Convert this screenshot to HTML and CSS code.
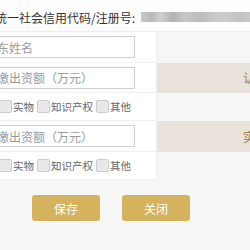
FILE: index.html
```html
<!DOCTYPE html>
<html lang="zh-CN">
<head>
    <meta charset="UTF-8">
    <title>股东信息</title>
    <link rel="stylesheet" href="styles.css">
</head>
<body>
    <div class="page">
        <div class="head-row">
            <span class="head-label">统一社会信用代码/注册号:</span>
            <span class="masked"></span>
        </div>
        <div class="form-table">
            <div class="cell left">
                <input class="text-input" type="text" placeholder="股东姓名">
            </div>
            <div class="cell right plain"></div>

            <div class="cell left">
                <input class="text-input" type="text" placeholder="实缴出资额（万元）">
            </div>
            <div class="cell right tinted">认缴出资额</div>

            <div class="cell left checks">
                <label class="check"><span class="box"></span>实物</label>
                <label class="check"><span class="box"></span>知识产权</label>
                <label class="check"><span class="box"></span>其他</label>
            </div>
            <div class="cell right plain"></div>

            <div class="cell left">
                <input class="text-input" type="text" placeholder="实缴出资额（万元）">
            </div>
            <div class="cell right tinted">实缴出资额</div>

            <div class="cell left checks">
                <label class="check"><span class="box"></span>实物</label>
                <label class="check"><span class="box"></span>知识产权</label>
                <label class="check"><span class="box"></span>其他</label>
            </div>
            <div class="cell right plain"></div>
        </div>
        <div class="actions">
            <button class="btn">保存</button>
            <button class="btn">关闭</button>
        </div>
    </div>
</body>
</html>
```

FILE: styles.css
```css
* {
    box-sizing: border-box;
}

body {
    margin: 0;
    background-color: #f6f6f7;
    font-family: "Noto Sans CJK SC", "Noto Sans", sans-serif;
    font-size: 12px;
    color: #333;
    overflow: hidden;
}

.page {
    margin-left: -20px;
    width: 270px;
}

.head-row {
    height: 32px;
    display: flex;
    align-items: center;
    padding: 3px 0 0 15px;
    background-color: #fdfdfd;
    border-bottom: 1px solid #ececec;
}

.head-label {
    font-size: 12px;
    color: #333;
    white-space: nowrap;
}

.masked {
    margin-left: 6px;
    height: 10px;
    flex: 1;
    background: linear-gradient(90deg, #c9c9c9 0, #b9b9b9 10px, #cfcfcf 20px, #b3b3b3 32px, #c7c7c7 44px, #bdbdbd 60px, #cdcdcd 80px, #c2c2c2 100px, #d0d0d0 120px);
}

.form-table {
    display: grid;
    grid-template-columns: 177px 93px;
    grid-template-rows: 31px 30px 28px 31px 28px;
}

.cell {
    display: flex;
    align-items: center;
    border-bottom: 1px solid #efefef;
}

.left {
    background-color: #fff;
    border-right: 1px solid #f0f0f0;
}

.right {
    white-space: nowrap;
    overflow: hidden;
    padding-left: 86px;
    color: #9a7a45;
}

.plain {
    background-color: #f6f6f7;
    border-bottom-color: #f6f6f7;
}

.tinted {
    background-color: #e9e2db;
    border-bottom-color: #e9e2db;
}

.text-input {
    width: 155px;
    height: 22px;
    padding: 0 4px;
    border: 1px solid #cfcfcf;
    background: #fff;
    font-family: inherit;
    font-size: 12px;
    color: #333;
    outline: none;
}

.text-input::placeholder {
    color: #9a9a9a;
}

.checks {
    padding-left: 19px;
    gap: 3px;
    font-size: 10.5px;
    color: #666;
}

.check {
    display: flex;
    align-items: center;
    gap: 1px;
    white-space: nowrap;
}

.box {
    width: 13px;
    height: 13px;
    border: 1px solid #cdcdcd;
    border-radius: 2px;
    background-color: #e8e8e8;
}

.actions {
    display: flex;
    gap: 22px;
    padding: 15px 0 0 52px;
}

.btn {
    width: 68px;
    height: 26px;
    border: none;
    border-radius: 3px;
    background-color: #d4b25e;
    color: #fff;
    font-family: inherit;
    font-size: 12px;
}
```
